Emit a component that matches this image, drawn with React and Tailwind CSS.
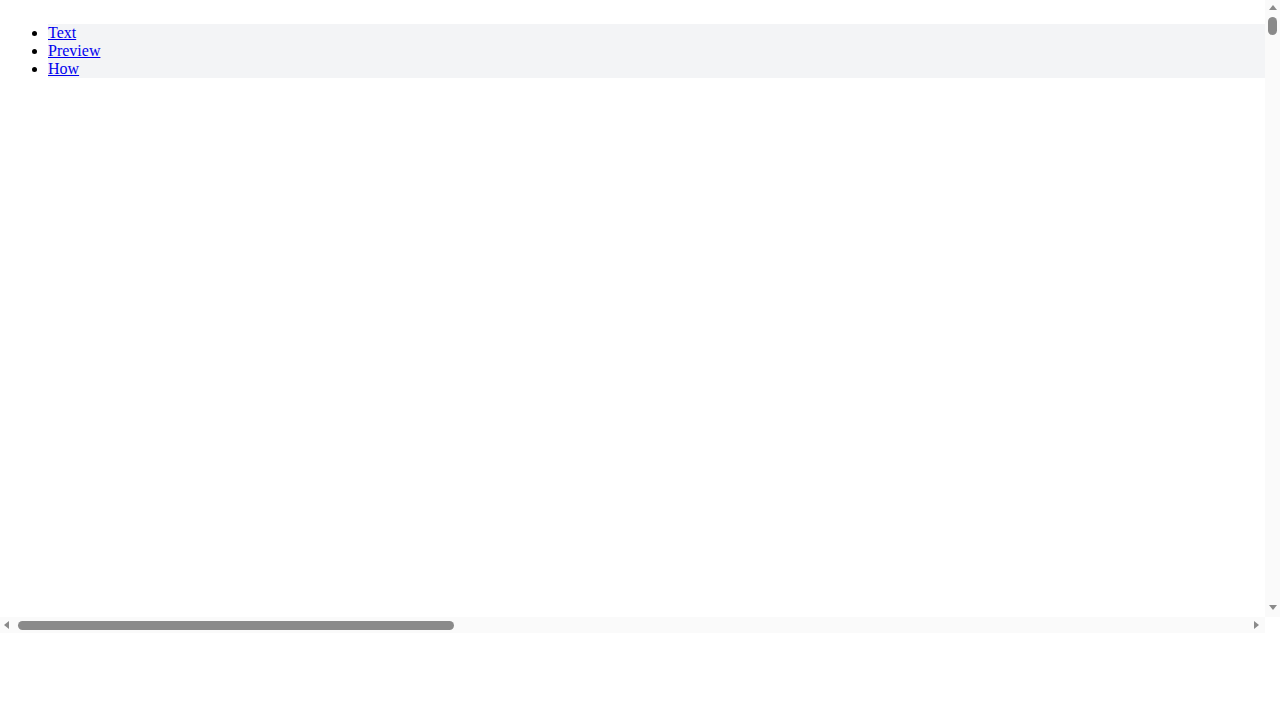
import React from 'react';

const LINKS = ['Text', 'Preview', 'How'];

// Stand-ins for the browser's native scrollbars
function Arrow({ dir }) {
  const pts = {
    up: '4,0 8,5 0,5',
    down: '0,0 8,0 4,5',
    left: '5,0 5,8 0,4',
    right: '0,0 5,4 0,8',
  }[dir];
  const vertical = dir === 'up' || dir === 'down';
  return (
    <svg
      width={vertical ? 8 : 5}
      height={vertical ? 5 : 8}
      viewBox={vertical ? '0 0 8 5' : '0 0 5 8'}
      className="shrink-0"
    >
      <polygon points={pts} fill="#8a8a8a" />
    </svg>
  );
}

export default function App() {
  return (
    <div className="grid h-[633px] w-full grid-cols-[1fr_15px] grid-rows-[617px_16px] bg-white">
      <div className="overflow-hidden">
        <div className="pl-2 pt-2 font-['Liberation_Serif',serif] text-[16px] leading-[18px] text-black">
          <ul className="mt-4 list-disc pl-10">
            {LINKS.map((label) => (
              <li key={label} className="bg-[#f3f4f6]">
                <a href={`#${label.toLowerCase()}`} className="text-[#0000ee] underline">
                  {label}
                </a>
              </li>
            ))}
          </ul>
        </div>
      </div>

      <div className="flex flex-col items-center bg-[#fafafa]">
        <div className="mt-[5px]">
          <Arrow dir="up" />
        </div>
        <div className="mt-[7px] h-[18px] w-[9px] rounded-full bg-[#8a8a8a]" />
        <div className="flex-1" />
        <div className="mb-[7px]">
          <Arrow dir="down" />
        </div>
      </div>

      <div className="flex items-center bg-[#fafafa]">
        <div className="ml-[4px] flex">
          <Arrow dir="left" />
        </div>
        <div className="ml-[9px] h-[9px] w-[436px] rounded-full bg-[#8a8a8a]" />
        <div className="flex-1" />
        <div className="mr-[6px] flex">
          <Arrow dir="right" />
        </div>
      </div>

      <div className="bg-white" />
    </div>
  );
}
